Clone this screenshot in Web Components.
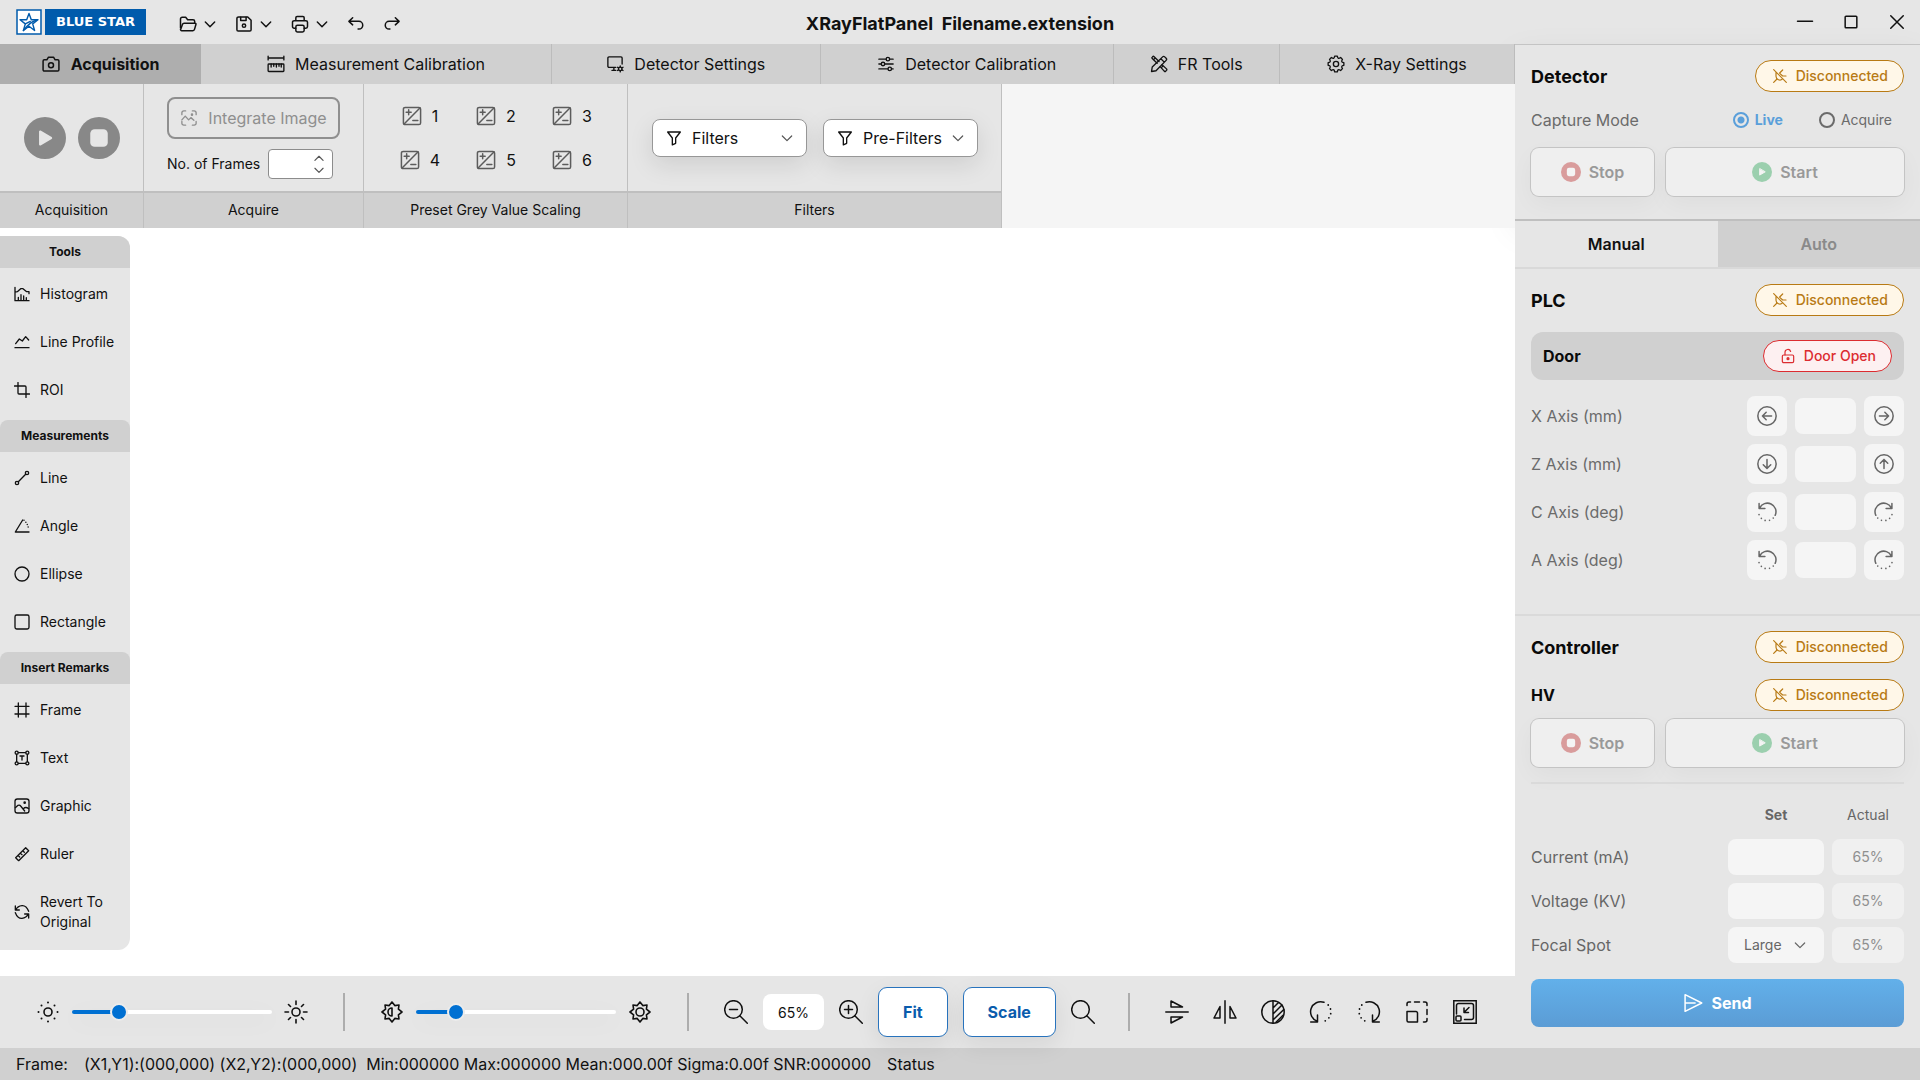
<!DOCTYPE html>
<html lang="en">
<head>
<meta charset="utf-8">
<title>XRayFlatPanel</title>
<style>
  html, body { margin: 0; height: 100%; }
  body { font-family: Inter, "Liberation Sans", sans-serif; font-size: 16px; line-height: 24px; color: #111; background: #fff; }
</style>
</head>
<body>
<xray-app></xray-app>
<script>
const BASE = `
  *, *::before, *::after { box-sizing: border-box; }
  button, input, select { font: inherit; color: inherit; margin: 0; }
  button { background: none; border: 0; padding: 0; display: inline-flex; align-items: center; justify-content: center; }
  input, select { border: 0; outline: 0; min-width: 0; }
  input[type=number] { appearance: textfield; -moz-appearance: textfield; }
  input::-webkit-inner-spin-button { display: none; }
  h1, h2, h3, ul { margin: 0; padding: 0; list-style: none; }
`;
function define(name, css, html, setup) {
  customElements.define(name, class extends HTMLElement {
    connectedCallback() {
      if (this.shadowRoot) return;
      const root = this.attachShadow({ mode: "open" });
      const body = typeof html === "function" ? html(this) : html;
      root.innerHTML = `<style>${BASE}${css}</style>${body}`;
      if (setup) setup(this, root);
    }
  });
}

/* ---------- icons ---------- */
function gear(n, outer, inner) {
  let d = "";
  const p = (a, r) => `${(12 + r * Math.sin(a)).toFixed(2)} ${(12 - r * Math.cos(a)).toFixed(2)}`;
  for (let i = 0; i < n; i++) {
    const a = i * 2 * Math.PI / n, s = Math.PI / n;
    d += `${i ? "L" : "M"}${p(a - s * .42, outer)}L${p(a + s * .42, outer)}Q${p(a + s * .7, inner)} ${p(a + s, inner)}Q${p(a + s * 1.3, inner)} ${p(a + s * 1.58, outer)}`;
  }
  return d + "Z";
}
const badge8 = `<path d="M18.400 9.200l.6-4.200-4.200.6L12 2 9.200 5.600 5 5l.6 4.200L2 12l3.600 2.800L5 19l4.200-.6L12 22l2.800-3.600 4.200.6-.6-4.200L22 12z"/>`;
const ICONS = {
  folder: `<path d="M3 16.500V6a2 2 0 0 1 2-2h4.200l2.400 2.800H18a2 2 0 0 1 2 2V11"/><path d="M3.200 18.500l2.200-6.200A2 2 0 0 1 7.300 11h13a1.200 1.200 0 0 1 1.200 1.600l-1.700 5.900a2 2 0 0 1-1.900 1.500H4.500a1.500 1.500 0 0 1-1.400-2z"/>`,
  chevron: `<path d="M5 9l7 7 7-7"/>`,
  up: `<path d="M5 16l7-7 7 7"/>`,
  save: `<path d="M5.500 3.500h11l4 4V19a1.500 1.500 0 0 1-1.500 1.500H5A1.500 1.500 0 0 1 3.500 19V5.500a2 2 0 0 1 2-2z"/><path d="M8 3.800v4h6.500v-4"/><circle cx="12" cy="14" r="2"/>`,
  printer: `<path d="M7 8V4.500A1.500 1.500 0 0 1 8.500 3h7A1.500 1.500 0 0 1 17 4.500V8M7 17H5a2 2 0 0 1-2-2v-5a2 2 0 0 1 2-2h14a2 2 0 0 1 2 2v5a2 2 0 0 1-2 2h-2"/><rect x="7" y="13.500" width="10" height="8" rx="2"/>`,
  undo: `<path d="M8 13l-4.500-4.200L8 4.500M4 8.800h11.500a4.600 4.600 0 0 1 0 9.200h-1"/>`,
  redo: `<path d="M16 13l4.500-4.200L16 4.500M20 8.800H8.500a4.600 4.600 0 0 0 0 9.200h1"/>`,
  min: `<path d="M3 11h18"/>`,
  max: `<rect x="5" y="5" width="14" height="14" rx="1"/>`,
  close: `<path d="M4.500 4.500l15 15M19.500 4.500l-15 15"/>`,
  camera: `<path d="M4 7h3l2-3.200h6L17 7h3a1.500 1.500 0 0 1 1.500 1.500V19a1.500 1.500 0 0 1-1.500 1.500H4A1.500 1.500 0 0 1 2.500 19V8.500A1.500 1.500 0 0 1 4 7z"/><circle cx="12" cy="13.500" r="3"/>`,
  measure: `<path d="M1.500 4h21M1.500 1.500v5M22.500 1.500v5M5.500 12v4M9 12v3M12.500 12v4M16 12v3M19 12v4"/><rect x="1.500" y="12" width="21" height="10" rx="1"/>`,
  monitor: `<path d="M13 16.500H4A1.500 1.500 0 0 1 2.500 15V4A1.500 1.500 0 0 1 4 2.500h16A1.500 1.500 0 0 1 21.500 4v8M8 20.500h5M10.500 16.500v4"/><circle cx="19" cy="18.500" r="2.300"/><path stroke-width="1.800" d="M19 14.500v1.500M19 21v1.500M15.300 16.400l1.300.8M21.400 19.800l1.300.8M22.700 16.400l-1.300.8M16.600 19.800l-1.300.8"/>`,
  sliders: `<path d="M2.500 5.500h9.500M17 5.500h4.500M2.500 12h3M10.500 12h11M2.500 18.500h12M19.500 18.500h2"/><circle cx="14.500" cy="5.500" r="2.300"/><circle cx="8" cy="12" r="2.300"/><circle cx="17" cy="18.500" r="2.300"/>`,
  tools: `<path d="M9.500 11L3 4.800a1.500 1.500 0 0 1 0-2L3.500 2.200a1.500 1.500 0 0 1 2 0L12 8.700M13.500 15.500l5.500 6a1.500 1.500 0 0 0 2 0l1-1a1.500 1.500 0 0 0 0-2l-6-5.500M7 3.800L5.500 5.500M16.500 15.500L15 17"/><path d="M2 22l1-6L16.800 2.500a2 2 0 0 1 2.800 0l1.900 1.900a2 2 0 0 1 0 2.800L8 21zM14.500 5l4.500 4.500"/>`,
  gear: `<path d="${gear(8, 10.6, 8.3)}"/><circle cx="12" cy="12" r="3.500"/>`,
  integrate: `<path d="M2.500 7.500V5A2.500 2.500 0 0 1 5 2.500h2.500M16.500 2.500H19A2.500 2.500 0 0 1 21.500 5v2.500M21.500 16.500V19a2.500 2.500 0 0 1-2.500 2.500h-2.500M7.500 21.500H5A2.500 2.500 0 0 1 2.500 19v-2.500M2.500 14.500l4.500-5 4.500 5 3-3 4 3.500"/><circle cx="16" cy="7.500" r=".8"/>`,
  exposure: `<rect x="1.700" y="1.700" width="20.600" height="20.600" rx="2"/><path d="M2.500 21.500l19-19M8 4.500v6M5 7.500h6M13 17.500h6"/>`,
  filter: `<path d="M2.500 3h19l-7 9v8l-5 2.300V12z"/>`,
  unplug: `<path d="M16.100 16.100l-.2.200a5.800 5.800 0 0 1-9.900-4.100V6M2.500 21.500l5-5M16 3l-4.500 4.500M12 8.500l4 3.500h5M2.500 2.500l19 19"/>`,
  lock: `<rect x="3.500" y="10.500" width="17" height="11.500" rx="2"/><path d="M7.500 10.500V6.500a4.300 4.300 0 0 1 8.400-1.300"/><circle cx="12" cy="16" r="1.500" fill="currentColor"/>`,
  left: `<circle cx="12" cy="12" r="11"/><path d="M17.500 12h-11M11 7.500L6.500 12l4.500 4.500"/>`,
  right: `<circle cx="12" cy="12" r="11"/><path d="M6.500 12h11M13 7.500l4.500 4.500-4.500 4.500"/>`,
  down: `<circle cx="12" cy="12" r="11"/><path d="M12 6.500v11M7.500 13l4.500 4.500 4.500-4.500"/>`,
  upc: `<circle cx="12" cy="12" r="11"/><path d="M12 17.500v-11M7.500 11L12 6.500l4.500 4.500"/>`,
  ccw: `<path d="M2.500 1.800v6h7M3.200 7.300A10.200 10.200 0 0 1 21.800 16"/><path stroke-dasharray="0 5.200" stroke-width="2" d="M19.500 19.300A10.200 10.200 0 0 1 2 12"/>`,
  cw: `<path d="M21.500 1.800v6h-7M20.800 7.300A10.200 10.200 0 0 0 2.200 16"/><path stroke-dasharray="0 5.200" stroke-width="2" d="M4.500 19.300A10.200 10.200 0 0 0 22 12"/>`,
  send: `<path d="M2.500 2l20 10-20 10V2zM2.500 12h12"/>`,
  histogram: `<path d="M1.500 2v20h21M1.500 9l3.500-.5 5-4.500h3.500l5.500 4.500h3.500v3M6.500 17v4.500M10.500 13v8.500M14.500 15v6.500M18.500 17.500v4"/>`,
  profile: `<path d="M1.500 20.500h21M2.500 14.500l5.500-7 4.500 3 5-6.500 4.500 5"/>`,
  roi: `<path d="M6 .8V16.500A1.500 1.500 0 0 0 7.500 18H23.200M.8 6H16.500A1.500 1.500 0 0 1 18 7.500V23.200"/>`,
  line: `<circle cx="4.500" cy="19.500" r="2.500"/><circle cx="19.500" cy="4.500" r="2.500"/><path d="M6.500 17.500l11-11"/>`,
  angle: `<path d="M13 3L2 21h20.500"/><path stroke-dasharray="0 4" stroke-width="2.200" d="M15 3.500q6 5 7 14"/>`,
  ellipse: `<circle cx="12" cy="12" r="10.500"/>`,
  rect: `<rect x="1.500" y="1.500" width="21" height="21" rx="2.500"/>`,
  frame: `<path d="M1.500 6.500h21M1.500 18h21M6.500 1.500v21M18 1.500v21"/>`,
  text: `<circle cx="4" cy="4" r="2.300"/><circle cx="20" cy="4" r="2.300"/><circle cx="4" cy="20" r="2.300"/><circle cx="20" cy="20" r="2.300"/><path d="M6.500 4h11M6.500 20h11M4 6.500v11M20 6.500v11M9 9h6M12 9v6"/>`,
  graphic: `<rect x="1.500" y="1.500" width="21" height="21" rx="3.500"/><path d="M2 14.500L6 11q2.500-1 4 1l6 7.500M14 16q3.500-3.500 8 0"/><circle cx="16" cy="7" r="1"/>`,
  ruler: `<path d="M2.500 17.500L17.500 2.500l4.500 4.500L7 22zM6 14l2.500 2.500M9.500 10.500l2.500 2.500M13 7l2.500 2.500"/>`,
  revert: `<path d="M2 3v6h6M2.500 9Q5.500 3 12 2.500t10 8.500M22 21v-6h-6M21.500 15Q18.500 21 12 21.500T2 13"/>`,
  sunDim: `<circle cx="12" cy="12" r="4"/><g stroke-width="2"><path d="M12 2.500v.01M12 21.500v.01M2.500 12h.01M21.500 12h.01M5.500 5.500h.01M18.500 5.500h.01M5.500 18.500h.01M18.500 18.500h.01"/></g>`,
  sun: `<circle cx="12" cy="12" r="4"/><path d="M12 1v3.500M12 19.500V23M1 12h3.500M19.500 12H23M4.500 4.500l2 2M17.500 17.500l2 2M4.500 19.500l2-2M17.500 6.500l2-2"/>`,
  contrastLow: `${badge8}<path d="M12 8v8a4 4 0 0 1 0-8z"/>`,
  contrastHigh: `${badge8}<circle cx="12" cy="12" r="4"/>`,
  zoomOut: `<circle cx="9.500" cy="9.500" r="8.800"/><path d="M15.800 15.800L23.300 23.300M5.500 9.500h8"/>`,
  zoomIn: `<circle cx="9.500" cy="9.500" r="8.800"/><path d="M15.800 15.800L23.300 23.300M5.500 9.500h8M9.500 5.500v8"/>`,
  search: `<circle cx="9.500" cy="9.500" r="8.800"/><path d="M15.800 15.800L23.300 23.300"/>`,
  flipV: `<path d="M.8 12h22.400M6 1v6h11.500zM6 23v-6h11.500z"/>`,
  flipH: `<path d="M12 .8v22.400M1 18h6V6.500zM23 18h-6V6.500z"/>`,
  invert: `<circle cx="12" cy="12" r="11.200"/><path d="M12 1v22M12.500 7.500l5-5M12.500 13.500l8.500-8.500M12.500 19.500l10.300-10M15 22.300l7-7"/>`,
  rotL: `<path d="M15 2.300A10 10 0 0 0 8.300 21.300M1.700 22h6.800v-7"/><path stroke-dasharray="0 4.600" stroke-width="1.800" d="M19.200 5A10 10 0 0 1 12.500 21.800"/>`,
  rotR: `<path d="M9 2.300A10 10 0 0 1 15.700 21.300M22.300 22h-6.800v-7"/><path stroke-dasharray="0 4.600" stroke-width="1.800" d="M4.800 5A10 10 0 0 0 11.500 21.800"/>`,
  scaleBox: `<path d="M2 5.500V4a2 2 0 0 1 2-2h1.500M18.500 2H20a2 2 0 0 1 2 2v1.500M9.500 2h5M22 9.500v5M22 18.500V20a2 2 0 0 1-2 2h-1.500M2 11.500h9a1.500 1.500 0 0 1 1.500 1.500v9H3.500A1.500 1.500 0 0 1 2 20.500z"/>`,
  fitBox: `<path stroke-linejoin="miter" d="M.8.8h22.400v22.400H.8z"/><path d="M3.500 14V5.500a2 2 0 0 1 2-2H18.500a2 2 0 0 1 2 2v12a2 2 0 0 1-2 2H11.500"/><rect x="3" y="16" width="5" height="5" rx="1"/><path d="M16 7.500l-4.800 4.800M11 8v4.500h4.500"/>`,
  play: `<circle cx="12" cy="12" r="12" fill="currentColor" stroke="none"/><path d="M9.200 8.300v7.400l6.300-3.700z" fill="var(--hole)" stroke="var(--hole)" stroke-width="1.200"/>`,
  stop: `<circle cx="12" cy="12" r="12" fill="currentColor" stroke="none"/><rect x="7" y="7" width="10" height="10" rx="2.500" fill="var(--hole)" stroke="none"/>`,
  star: `<path d="M1 1h24v24H1z" fill="#fff" stroke-linejoin="miter" stroke-width="1.500"/><path stroke-width="1.400" d="M13 4.500l2.300 6.300H22l-5.300 4.100 1.900 6.600L13 17.300l-5.600 4.200 1.900-6.600L4 10.800h6.700z"/><path stroke-width="1.400" d="M7.400 21.500Q14 13 19.500 11.500M9.300 14.900l5-2.500"/>`,
};
define("ui-icon", `
  :host { display: inline-flex; flex: none; --hole: #e6e6e6; }
  svg { display: block; fill: none; stroke: currentColor; stroke-linecap: round; stroke-linejoin: round; }
`, el => {
  const s = el.getAttribute("size") || 20, box = el.getAttribute("box") || 24;
  return `<svg width="${s}" height="${s}" viewBox="0 0 ${box} ${box}" stroke-width="${el.getAttribute("stroke") || 1.8}" aria-hidden="true">${ICONS[el.getAttribute("name")]}</svg>`;
});

/* ---------- title bar ---------- */
define("title-bar", `
  :host { display: grid; grid-template-columns: 1fr auto 1fr; align-items: center; height: 44px; padding: 0 13px; background: #e6e6e6; }
  .left, .quick, .logo, .win { display: flex; align-items: center; }
  .left { gap: 32px; padding-left: 3px; }
  .logo { gap: 3px; color: #005bac; }
  .logo b { background: #005bac; color: #fff; font: 700 13px/26px "DejaVu Sans", sans-serif; padding: 0 11px; height: 26px; white-space: nowrap; }
  .quick { gap: 16px; padding-top: 4px; }
  .quick button { gap: 4px; }
  h1 { font-size: 18px; line-height: 24px; font-weight: 700; white-space: pre; padding-top: 3px; }
  .win { justify-content: flex-end; gap: 26px; }
`, `
  <div class="left">
    <div class="logo"><ui-icon name="star" size="26" box="26"></ui-icon><b>BLUE STAR</b></div>
    <div class="quick">
      <button aria-label="Open"><ui-icon name="folder"></ui-icon><ui-icon name="chevron" size="16" stroke="2.200"></ui-icon></button>
      <button aria-label="Save"><ui-icon name="save"></ui-icon><ui-icon name="chevron" size="16" stroke="2.200"></ui-icon></button>
      <button aria-label="Print"><ui-icon name="printer"></ui-icon><ui-icon name="chevron" size="16" stroke="2.200"></ui-icon></button>
      <button aria-label="Undo"><ui-icon name="undo"></ui-icon></button>
      <button aria-label="Redo"><ui-icon name="redo"></ui-icon></button>
    </div>
  </div>
  <h1>XRayFlatPanel  Filename.extension</h1>
  <div class="win">
    <button aria-label="Minimize"><ui-icon name="min"></ui-icon></button>
    <button aria-label="Maximize"><ui-icon name="max"></ui-icon></button>
    <button aria-label="Close"><ui-icon name="close"></ui-icon></button>
  </div>
`);

/* ---------- main tabs ---------- */
define("main-tab", `
  :host { display: flex; background: #d0d0d0; border-right: 1px solid #bcbcbc; }
  button { flex: 1; gap: 10px; height: 40px; white-space: nowrap; }
  :host([active]) { background: #aeaeae; border-color: #aeaeae; }
  :host([active]) button { font-weight: 700; }
`, el => `<button role="tab" aria-selected="${el.hasAttribute("active")}"><ui-icon name="${el.getAttribute("icon")}" size="${el.getAttribute("size") || 18}"></ui-icon><slot></slot></button>`);

define("main-tabs", `
  :host { display: flex; position: relative; z-index: 1; }
`, `
  <main-tab icon="camera" size="20" active style="flex:201 1 0">Acquisition</main-tab>
  <main-tab icon="measure" style="flex:351 1 0">Measurement Calibration</main-tab>
  <main-tab icon="monitor" style="flex:269 1 0">Detector Settings</main-tab>
  <main-tab icon="sliders" style="flex:293 1 0">Detector Calibration</main-tab>
  <main-tab icon="tools" style="flex:166 1 0">FR Tools</main-tab>
  <main-tab icon="gear" style="flex:235 1 0">X-Ray Settings</main-tab>
`);

/* ---------- ribbon ---------- */
define("ribbon-group", `
  :host { display: flex; flex-direction: column; background: #e6e6e6; border-right: 1px solid #bfbfbf; }
  .body { flex: 1; min-height: 107px; display: flex; align-items: center; justify-content: center; padding: 0 23px 0 var(--lead, 23px); }
  :host([wide]) .body { padding-right: 35px; }
  .name { border-top: 2px solid #bfbfbf; background: #d0d0d0; font-size: 14px; line-height: 20px; padding: 7px 0 8px; text-align: center; }
`, el => `<div class="body"><slot></slot></div><div class="name">${el.getAttribute("label")}</div>`);

define("drop-select", `
  :host { display: block; }
  label { display: flex; align-items: center; width: 155px; height: 38px; padding: 0 11px 0 13px; background: #fff; border: 1px solid #979797; border-radius: 8px; box-shadow: 0 8px 24px rgba(0,0,0,.1); }
  select { appearance: none; background: none; flex: 1; padding: 0 0 0 10px; height: 36px; }
  .c { color: #555; pointer-events: none; }
`, el => `<label><ui-icon name="filter" size="16" stroke="2"></ui-icon><select aria-label="${el.getAttribute("label")}"><option>${el.getAttribute("label")}</option></select><ui-icon class="c" name="chevron" size="16"></ui-icon></label>`);

define("ribbon-bar", `
  :host { display: flex; background: #f5f5f5; position: relative; z-index: 1; }
  .pair { display: flex; gap: 12px; }
  .filters { display: flex; gap: 16px; }
  .round { color: #888; }
  .acquire { display: flex; flex-direction: column; gap: 10px; }
  .integrate { height: 42px; width: 173px; border: 2px solid #8f8f8f; border-radius: 8px; color: #8f8f8f; gap: 10px; white-space: nowrap; }
  .frames { display: flex; align-items: center; gap: 8px; font-size: 14px; line-height: 20px; }
  .spin { display: flex; width: 65px; height: 30px; background: #fff; border: 1px solid #8c8c8c; border-radius: 4px; }
  .spin input { flex: 1; width: 0; background: none; padding: 0 0 0 8px; }
  .spin div { display: flex; flex-direction: column; justify-content: center; padding-right: 6px; color: #555; }
  .spin button { height: 12px; }
  .presets { display: grid; grid-template-columns: repeat(3, 40px); column-gap: 36px; }
  .presets button { height: 44px; gap: 10px; }
  .presets ui-icon { color: #5c5c5c; }
`, `
  <ribbon-group label="Acquisition" style="--lead:24px"><div class="pair">
    <button class="round" aria-label="Play"><ui-icon name="play" size="42"></ui-icon></button>
    <button class="round" aria-label="Stop"><ui-icon name="stop" size="42"></ui-icon></button>
  </div></ribbon-group>
  <ribbon-group label="Acquire"><div class="acquire">
    <button class="integrate"><ui-icon name="integrate" size="18"></ui-icon>Integrate Image</button>
    <div class="frames"><label for="frames">No. of Frames</label>
      <div class="spin"><input id="frames" type="number"><div><button aria-label="More"><ui-icon name="up" size="14" stroke="2"></ui-icon></button><button aria-label="Fewer"><ui-icon name="chevron" size="14" stroke="2"></ui-icon></button></div></div>
    </div>
  </div></ribbon-group>
  <ribbon-group label="Preset Grey Value Scaling" wide style="--lead:36px"><div class="presets">
    ${[1, 2, 3, 4, 5, 6].map(n => `<button><ui-icon name="exposure"></ui-icon>${n}</button>`).join("")}
  </div></ribbon-group>
  <ribbon-group label="Filters" style="--lead:24px"><div class="filters">
    <drop-select label="Filters"></drop-select><drop-select label="Pre-Filters"></drop-select>
  </div></ribbon-group>
`);

/* ---------- tool palette ---------- */
define("tool-group", `
  :host { display: block; }
  h2 { font-size: 12px; line-height: 16px; font-weight: 700; padding: 8px 0; text-align: center; background: #d0d0d0; border-radius: 0 8px 0 0; }
  :host(:not(:first-of-type)) h2 { border-radius: 8px 8px 0 0; }
  ul { display: flex; flex-direction: column; gap: 28px; padding: 16px 0 20px 14px; }
  :host(:last-of-type) ul { padding-bottom: 18px; }
  button { gap: 10px; font-size: 14px; line-height: 20px; text-align: left; justify-content: flex-start; }
  li { display: flex; }
`, el => `<h2>${el.getAttribute("label")}</h2><ul>${el.getAttribute("items").split(";").map(t => {
  const [icon, name] = t.split(":");
  return `<li><button><ui-icon name="${icon}" size="16" stroke="2"></ui-icon><span>${name}</span></button></li>`;
}).join("")}</ul>`);

define("tool-palette", `
  :host { display: block; width: 130px; background: #e6e6e6; border-radius: 0 12px 12px 0; overflow: hidden; }
`, `
  <tool-group label="Tools" items="histogram:Histogram;profile:Line Profile;roi:ROI"></tool-group>
  <tool-group label="Measurements" items="line:Line;angle:Angle;ellipse:Ellipse;rect:Rectangle"></tool-group>
  <tool-group label="Insert Remarks" items="frame:Frame;text:Text;graphic:Graphic;ruler:Ruler;revert:Revert To<br>Original"></tool-group>
`);

/* ---------- view toolbar ---------- */
define("range-slider", `
  :host { display: flex; align-items: center; gap: 12px; }
  input { appearance: none; width: 200px; height: 18px; background: none; }
  input::-webkit-slider-runnable-track { height: 4px; border-radius: 2px; background: linear-gradient(90deg, #0070d2 var(--v), #fff var(--v)); box-shadow: 0 6px 24px rgba(0,0,0,.08); }
  input::-webkit-slider-thumb { appearance: none; width: 18px; height: 18px; margin-top: -7px; border-radius: 50%; background: #0070d2; border: 2px solid #ececec; }
`, el => `<ui-icon name="${el.getAttribute("low")}" size="24" stroke="1.600"></ui-icon>
  <input type="range" aria-label="${el.getAttribute("label")}" value="${el.getAttribute("value")}" style="--v:${el.getAttribute("value")}%">
  <ui-icon name="${el.getAttribute("high")}" size="24" stroke="1.600"></ui-icon>`);

define("view-toolbar", `
  :host { display: flex; align-items: center; gap: 32px; height: 72px; padding: 0 38px 0 36px; background: #e6e6e6; }
  i { width: 2px; height: 38px; margin: 0 3px; background: #adadad; }
  i:last-of-type { margin-left: auto; }
  .zoom, .ops { display: flex; align-items: center; }
  .zoom { gap: 15px; }
  .ops { gap: 24px; }
  input { width: 61px; height: 36px; border-radius: 8px; background: #fff; text-align: center; font-size: 14px; padding: 0; }
  .key { height: 50px; border: 1px solid #2873bd; border-radius: 9px; background: #fff; color: #0a5cad; font-weight: 700; padding: 0 24px; box-shadow: 0 8px 24px rgba(0,0,0,.08); }
`, `
  <range-slider low="sunDim" high="sun" label="Brightness" value="21"></range-slider><i></i>
  <range-slider low="contrastLow" high="contrastHigh" label="Contrast" value="17"></range-slider><i></i>
  <div class="zoom">
    <button aria-label="Zoom out"><ui-icon name="zoomOut" size="24" stroke="1.500"></ui-icon></button>
    <input aria-label="Zoom" value="65%">
    <button aria-label="Zoom in"><ui-icon name="zoomIn" size="24" stroke="1.500"></ui-icon></button>
    <button class="key">Fit</button>
    <button class="key">Scale</button>
    <button aria-label="Magnify"><ui-icon name="search" size="24" stroke="1.500"></ui-icon></button>
  </div><i></i>
  <div class="ops">
    ${[["flipV", "Flip vertical"], ["flipH", "Flip horizontal"], ["invert", "Invert"], ["rotL", "Rotate left"], ["rotR", "Rotate right"], ["scaleBox", "Region"], ["fitBox", "Fit region"]]
      .map(([n, l]) => `<button aria-label="${l}"><ui-icon name="${n}" size="24" stroke="1.500"></ui-icon></button>`).join("")}
  </div>
`);

/* ---------- control panel ---------- */
define("status-badge", `
  :host { display: inline-flex; align-items: center; gap: 8px; height: 32px; padding: 0 15px 0 16px; box-sizing: border-box; border: 1px solid #b87a14; border-radius: 16px; background: #fff7e8; color: #b87a14; font-size: 14px; line-height: 20px; font-weight: 500; white-space: nowrap; }
  :host([danger]) { border-color: #dc2c30; color: #dc2c30; background: #fdf0f1; }
`, el => `<ui-icon name="${el.getAttribute("icon") || "unplug"}" size="16"></ui-icon><slot></slot>`);

define("run-buttons", `
  :host { display: flex; gap: 12px; }
  button { height: 48px; gap: 8px; border-radius: 8px; background: #efefef; color: #999; font-weight: 600; box-shadow: 0 0 0 1px #c4c4c4, 0 8px 24px rgba(0,0,0,.04); }
  .stop { flex: 123 1 0; } .start { flex: 238 1 0; }
  ui-icon { --hole: #f4f4f4; }
  .stop ui-icon { color: #d99c9c; } .start ui-icon { color: #9bcfae; }
`, `<button class="stop"><ui-icon name="stop"></ui-icon>Stop</button><button class="start"><ui-icon name="play"></ui-icon>Start</button>`);

define("axis-row", `
  :host { display: flex; align-items: center; gap: 8px; color: #6b6b6b; }
  label { flex: 1; }
  button { width: 40px; height: 40px; border-radius: 8px; background: #f5f5f5; color: #666; }
  input { width: 61px; height: 36px; border-radius: 8px; background: #f5f5f5; text-align: center; }
`, el => `<label for="v">${el.getAttribute("label")}</label>
  <button aria-label="Decrease"><ui-icon name="${el.getAttribute("back")}"></ui-icon></button>
  <input id="v" type="text">
  <button aria-label="Increase"><ui-icon name="${el.getAttribute("forward")}"></ui-icon></button>`);

define("control-panel", `
  :host { display: flex; flex-direction: column; width: 405px; flex: none; }
  section { display: flex; flex-direction: column; background: #e6e6e6; padding: 15px 16px; }
  .row { display: flex; align-items: center; justify-content: space-between; }
  h2, h3 { color: #0a0a0a; }
  h2 { font-size: 18px; line-height: 24px; font-weight: 700; padding-top: 2px; }
  h3 { font-size: 16px; line-height: 24px; font-weight: 700; }
  .detector { gap: 16px; border-top: 1px solid #c4c4c4; padding-bottom: 23px; box-shadow: 0 12px 32px rgba(0,0,0,.08); }
  .mode { color: #6b6b6b; padding-right: 12px; }
  .radios { display: flex; gap: 36px; font-size: 14px; }
  .radios label { display: flex; align-items: center; gap: 6px; }
  .radios input { appearance: none; width: 16px; height: 16px; border: 2px solid #6b6b6b; border-radius: 50%; }
  .radios .on { color: #5a9fda; font-weight: 700; }
  .radios input:checked { border-color: #5a9fda; background: radial-gradient(circle, #5a9fda 3px, transparent 4px); }
  .tabs { display: flex; border-top: 2px solid #bfbfbf; border-bottom: 2px solid #d9d9d9; background: #e6e6e6; }
  .tabs button { flex: 1; height: 46px; font-weight: 600; }
  .tabs button + button { background: #d0d0d0; color: #8a8a8a; }
  .plc { padding-bottom: 34px; gap: 16px; border-bottom: 2px solid #dadada; }
  .door { height: 48px; padding: 0 12px; border-radius: 12px; background: #d0d0d0; }
  .axes { display: flex; flex-direction: column; gap: 8px; }
  .controller { flex: 1; }
  .controller .row + .row { margin-top: 16px; }
  run-buttons { margin-top: 8px; }
  .detector run-buttons { margin-top: 0; }
  hr { border: 0; height: 2px; background: #dadada; width: 100%; margin: 15px 0 19px; flex: none; }
  table { border-collapse: collapse; width: 100%; color: #666; }
  th, td { padding: 4px 0; text-align: left; font-weight: 400; }
  thead th { font-size: 14px; line-height: 24px; padding: 0 0 8px; text-align: center; }
  thead th.b { font-weight: 700; }
  .set { width: 96px; }
  .act { width: 80px; }
  thead .act, tbody .act { padding-left: 8px; }
  .field { display: flex; align-items: center; justify-content: center; width: 100%; height: 36px; border-radius: 8px; background: #f5f5f5; font-size: 14px; color: #666; }
  output.field { background: #f0f0f0; color: #8f8f8f; }
  .pick { padding: 0 16px; }
  .pick select { appearance: none; background: none; flex: 1; padding: 0; height: 36px; }
  .send { height: 48px; flex: none; margin-top: 12px; gap: 8px; border-radius: 8px; color: #fff; font-weight: 700; background: linear-gradient(#62b0ea, #5b9cd5); }
`, `
  <section class="detector">
    <div class="row"><h2>Detector</h2><status-badge>Disconnected</status-badge></div>
    <div class="row mode"><span>Capture Mode</span><div class="radios">
      <label class="on"><input type="radio" name="mode" checked>Live</label>
      <label><input type="radio" name="mode">Acquire</label></div></div>
    <run-buttons></run-buttons>
  </section>
  <div class="tabs" role="tablist"><button role="tab">Manual</button><button role="tab">Auto</button></div>
  <section class="plc">
    <div class="row"><h2>PLC</h2><status-badge>Disconnected</status-badge></div>
    <div class="row door"><h3>Door</h3><status-badge danger icon="lock">Door Open</status-badge></div>
    <div class="axes">
      <axis-row label="X Axis (mm)" back="left" forward="right"></axis-row>
      <axis-row label="Z Axis (mm)" back="down" forward="upc"></axis-row>
      <axis-row label="C Axis (deg)" back="ccw" forward="cw"></axis-row>
      <axis-row label="A Axis (deg)" back="ccw" forward="cw"></axis-row>
    </div>
  </section>
  <section class="controller">
    <div class="row"><h2>Controller</h2><status-badge>Disconnected</status-badge></div>
    <div class="row"><h3>HV</h3><status-badge>Disconnected</status-badge></div>
    <run-buttons></run-buttons>
    <hr>
    <table>
      <thead><tr><td></td><th class="set b">Set</th><th class="act">Actual</th></tr></thead>
      <tbody>
        <tr><th><label for="cur">Current (mA)</label></th><td class="set"><input class="field" id="cur"></td><td class="act"><output class="field">65%</output></td></tr>
        <tr><th><label for="vol">Voltage (KV)</label></th><td class="set"><input class="field" id="vol"></td><td class="act"><output class="field">65%</output></td></tr>
        <tr><th><label for="foc">Focal Spot</label></th><td class="set"><div class="field pick"><select id="foc"><option>Large</option></select><ui-icon name="chevron" size="16"></ui-icon></div></td><td class="act"><output class="field">65%</output></td></tr>
      </tbody>
    </table>
    <button class="send"><ui-icon name="send"></ui-icon>Send</button>
  </section>
`);

/* ---------- status bar and shell ---------- */
define("status-bar", `
  :host { display: flex; gap: 16px; height: 32px; align-items: center; padding: 0 16px; background: #d0d0d0; white-space: pre; font-feature-settings: "calt" 0; }
`, `<span>Frame:</span><span>(X1,Y1):(000,000) (X2,Y2):(000,000)  Min:000000 Max:000000 Mean:000.00f Sigma:0.00f SNR:000000</span><span>Status</span>`);

define("xray-app", `
  :host { display: flex; flex-direction: column; min-height: 100vh; }
  .work { flex: 1; display: flex; }
  .left { flex: 1; min-width: 0; display: flex; flex-direction: column; }
  main { flex: 1; padding: 8px 0 24px; background: #fff; }
  view-toolbar { position: relative; z-index: 1; }
`, `
  <title-bar></title-bar>
  <div class="work">
    <div class="left">
      <main-tabs></main-tabs>
      <ribbon-bar></ribbon-bar>
      <main><tool-palette></tool-palette></main>
      <view-toolbar></view-toolbar>
    </div>
    <control-panel></control-panel>
  </div>
  <status-bar></status-bar>
`);
</script>
</body>
</html>
